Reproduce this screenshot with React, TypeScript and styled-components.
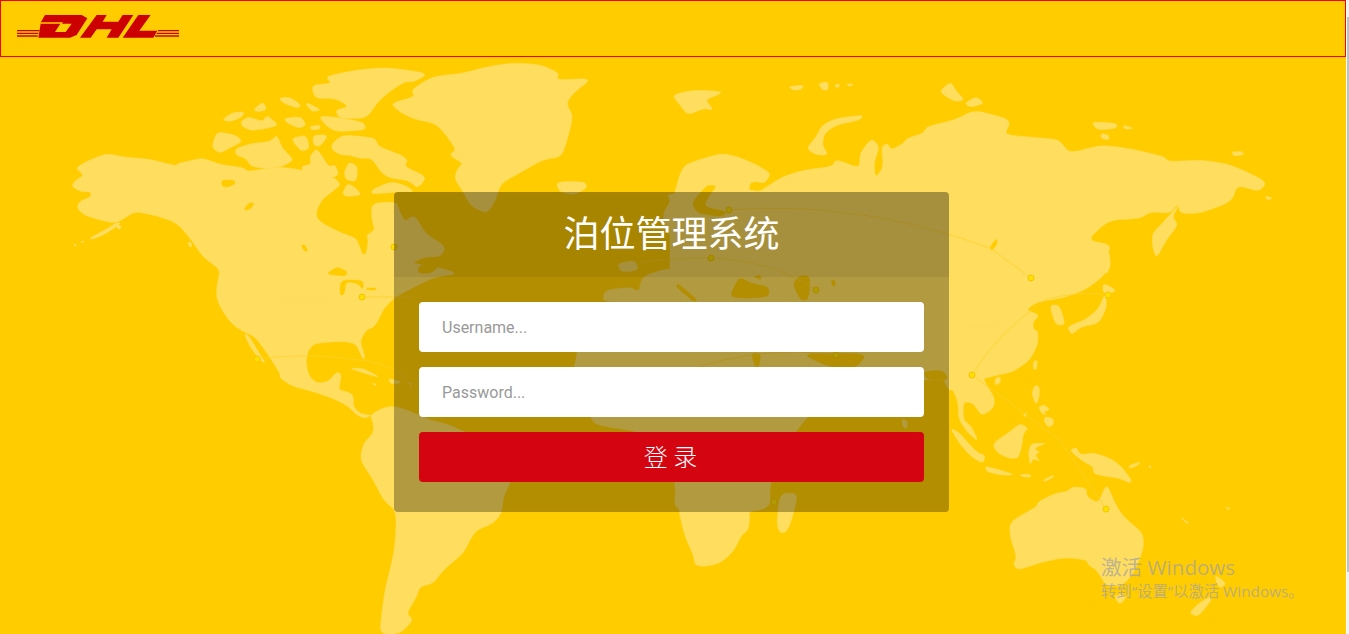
import React from "react";
import styled, { createGlobalStyle } from "styled-components";

const Global = createGlobalStyle`
  html, body { margin: 0; padding: 0; background: #fff; overflow: hidden; }
  * { box-sizing: border-box; }
`;

const Shell = styled.div`
  display: flex;
  width: 1349px;
  height: 634px;
  overflow: hidden;
`;
const Page = styled.main`
  position: relative;
  width: 1346px;
  height: 634px;
  background: #ffcc00;
  font-family: Roboto, "Noto Sans CJK SC", sans-serif;
`;
const Track = styled.div`
  width: 2px;
  height: 634px;
  margin-left: 1px;
  padding-top: 17px;
  background: #f1f1f1;
`;
const Thumb = styled.div`
  width: 2px;
  height: 555px;
  background: #c1c1c1;
`;
const MapArt = styled.svg`
  position: absolute;
  left: 0;
  top: 0;
  width: 1346px;
  height: 634px;
`;
const Land = styled.path`
  fill: #ffdd5e;
  stroke: #ffdd5e;
  stroke-width: 1.5;
  stroke-linejoin: round;
`;
const Sea = styled.path`
  fill: #ffcc00;
  stroke: #ffcc00;
  stroke-width: 1;
  stroke-linejoin: round;
`;
const Route = styled.path`
  fill: none;
  stroke: #ffd22a;
  stroke-width: 0.8;
`;
const Hub = styled.circle`
  fill: #ffdf00;
  stroke: #f7c600;
  stroke-width: 1;
`;
const Header = styled.header`
  position: relative;
  height: 57px;
  border: 1px solid #f00000;
  padding: 14px 0 0 16px;
`;
const Logo = styled.svg`
  display: block;
  width: 164px;
  height: 26px;
`;
const LogoMark = styled.path`
  fill: #cc0000;
  fill-rule: evenodd;
`;
const Panel = styled.section`
  position: relative;
  width: 555px;
  height: 320px;
  margin: 135px 0 0 394px;
  border-radius: 4px;
  overflow: hidden;
  background: rgba(0, 0, 0, 0.3);
`;
const PanelHead = styled.div`
  height: 85px;
  display: flex;
  align-items: center;
  justify-content: center;
  padding-bottom: 7px;
  background: rgba(0, 0, 0, 0.06);
`;
const Title = styled.h1`
  margin: 0;
  color: #fff;
  font-family: "Noto Sans CJK SC", sans-serif;
  font-size: 36px;
  font-weight: 400;
  line-height: 50px;
`;
const Form = styled.form`
  display: flex;
  flex-direction: column;
  gap: 15px;
  padding: 25px 25px 0;
`;
const Field = styled.input`
  display: block;
  width: 100%;
  height: 50px;
  padding: 0 23px;
  border: 0;
  border-radius: 4px;
  background: #fff;
  font-family: Roboto, sans-serif;
  font-size: 16px;
  color: #333;
  &::placeholder { color: #999; opacity: 1; }
`;
const Submit = styled.button`
  height: 50px;
  border: 0;
  border-radius: 4px;
  background: #d40511;
  color: #fff;
  font-family: "Noto Sans CJK SC", sans-serif;
  font-size: 24px;
  font-weight: 300;
  padding: 0 2px 4px 0;
`;
const Watermark = styled.aside`
  position: absolute;
  left: 1101px;
  top: 553px;
  color: rgba(160, 160, 170, 0.7);
  font-family: "Open Sans", "Noto Sans CJK SC", sans-serif;
  white-space: nowrap;
`;
const WatermarkTitle = styled.div`
  font-size: 20.6px;
  line-height: 28px;
`;
const WatermarkHint = styled.div`
  font-size: 15.35px;
  line-height: 20px;
`;

type Region = { at: string; land: string[]; sea?: string[] };

const regions: Region[] = [
  {
    at: "translate(60 60) scale(.3444 .3333)",
    land: [
      "45,325 75,305 135,280 190,292 260,297 335,318 345,310 410,295 430,300 470,315 530,322 545,335 600,325 650,322 700,330 770,345 800,355 815,375 790,395 760,420 745,450 745,475 770,495 820,520 860,535 870,560 878,585 890,580 895,540 890,525 915,510 905,480 905,430 975,425 985,450 1000,485 1030,465 1060,520 1120,560 1105,590 1060,590 1020,610 1090,620 1155,640 1100,650 1080,655 1030,680 975,710 940,745 920,790 900,810 520,810 490,780 455,720 455,680 465,630 440,610 415,590 385,545 350,500 320,480 260,462 215,455 165,490 115,480 70,465 50,445 55,425 90,410 90,395 60,395 35,380 40,365 70,345",
      "85,535 130,510 165,488 178,490 135,520 95,538",
      "40,553 48,553 44,560",
      "60,545 70,542 66,549",
      "165,495 178,498 175,508 165,505",
      "372,545 382,548 382,562 374,558",
      "790,250 820,225 880,230 915,235 925,260 990,285 1010,300 1000,320 1065,350 1040,385 1010,360 960,355 935,340 905,295 870,295 840,285 815,285 790,270",
      "820,400 835,370 860,385 875,405 830,410",
      "825,335 840,305 865,320 860,365 830,360",
      "905,390 960,365 1000,375 1030,395 990,395 960,398 905,402",
      "510,265 560,250 610,245 630,225 645,265 680,300 645,320 600,325 555,320 540,295 510,285",
      "440,262 455,215 510,225 530,245 490,265 465,280",
      "670,235 715,225 725,265 700,275",
      "735,225 780,225 755,260 735,255",
      "725,290 745,265 765,295 780,320 800,315 810,345 780,355 740,345 710,340 700,320 730,312",
      "470,180 500,158 535,155 530,170 495,185",
      "525,185 545,170 590,185 600,165 635,195 600,205 555,212 530,200",
      "650,175 700,170 715,195 695,205 660,190",
      "560,150 590,125 600,150 575,155",
      "635,115 665,110 700,135 690,145 650,130",
      "725,200 755,195 755,208 730,210",
      "710,125 760,150 730,155",
      "750,165 880,185 890,210 800,215 770,195",
      "730,75 790,70 770,50 860,30 950,22 1070,40 1030,65 1000,65 950,100 920,130 890,175 810,175 800,150 840,140 800,115 740,115",
      "960,130 1030,110 1020,90 1080,50 1170,40 1240,20 1320,8 1400,15 1450,40 1440,60 1545,55 1490,100 1470,130 1490,170 1470,250 1455,290 1400,300 1350,330 1280,370 1265,420 1240,460 1195,440 1170,395 1145,355 1155,325 1170,310 1130,285 1150,270 1125,230 1090,190 1030,178 985,155",
      "1440,365 1525,365 1530,385 1490,405 1450,395",
    ],
    sea: [
      "470,360 505,360 510,372 485,382 470,378",
      "535,445 550,428 565,430 555,445 540,452",
      "700,555 712,555 720,575 708,572",
      "775,640 805,620 835,635 830,648 790,645",
      "815,660 880,660 880,690 865,670 830,665 825,705 812,705",
      "890,685 920,683 915,690 890,690",
      "1040,620 1100,590 1105,610 1080,640 1040,640",
    ],
  },
  {
    at: "translate(200 300) scale(.3333)",
    land: [
      "50,0 75,45 100,75 130,95 165,110 205,165 240,220 240,235 280,260 330,272 370,285 420,305 445,320 470,345 495,355 515,345 505,345 480,340 460,320 460,285 440,275 415,270 425,225 410,215 385,245 350,250 325,225 318,185 325,150 345,130 400,125 445,125 470,135 490,180 495,170 480,125 495,95 530,65 550,10 555,0",
      "132,100 147,108 178,160 197,190 180,180 150,140",
      "510,345 545,325 580,318 620,330 690,360 750,375 780,390 850,420 930,480 935,540 910,590 905,640 880,670 830,690 810,720 790,760 730,810 700,850 660,860 650,890 620,940 640,960 600,1002 540,1002 545,940 555,870 570,810 585,740 590,635 550,600 520,540 480,480 490,430 520,400 520,370",
      "450,205 490,205 540,232 510,225 470,212",
      "565,235 605,245 590,252 570,250",
      "515,250 530,252 525,257",
      "625,250 637,250 635,254",
    ],
  },
  {
    at: "translate(394 192) scale(.3546 .3333)",
    land: [
      "590,335 592,295 665,285 690,300 700,255 750,235 790,230 795,180 780,130 760,100 760,60 780,30 770,0 1568,0 1568,570 1500,525 1430,660 1390,560 1330,480 1200,600 1080,630 1040,530 1000,480 980,330",
      "520,330 980,330 1000,480 1040,530 1090,620 1180,660 1130,720 1100,800 1060,870 1060,960 790,960 795,880 770,800 700,720 570,700 550,670 500,560 520,470",
      "630,215 680,205 690,235 640,240",
      "1432,680 1450,690 1445,710 1435,705",
    ],
  },
  {
    at: "translate(600 500) scale(.3333)",
    land: [
      "230,-20 240,50 255,110 280,165 285,195 310,200 360,190 400,155 425,105 445,90 450,45 445,40 490,5 500,-20",
      "540,-20 595,-20 575,60 560,95 540,100 530,70",
    ],
  },
  {
    at: "translate(670 70) scale(.3954 .3333)",
    land: [
      "5,75 60,60 135,65 110,80 90,90 110,120 85,115 45,135 25,105",
      "300,50 340,45 330,60 310,60",
      "375,40 400,35 400,60 385,60",
      "415,45 430,42 425,55",
      "445,42 465,42 455,50",
      "490,135 480,150 420,165 390,190 385,225 400,255 370,255 345,235 370,200 385,165 420,145",
      "680,65 710,35 725,65 745,90 720,95",
      "745,100 775,80 795,100 760,112",
      "1065,155 1130,160 1130,175 1080,180",
      "1145,165 1175,175 1150,178",
      "1090,190 1110,195 1110,210 1090,205",
      "1420,245 1450,245 1450,255 1425,258",
      "0,420 30,290 70,270 130,250 170,260 220,285 255,310 240,340 210,335 205,360 225,365 245,350 285,320 340,300 410,290 420,268 480,295 480,250 510,205 530,230 515,280 520,325 540,290 535,230 550,220 560,240 590,220 600,205 640,190 650,170 720,150 770,120 850,145 860,160 845,195 950,205 985,210 1010,250 1090,225 1160,235 1250,260 1260,275 1350,270 1420,285 1510,335 1490,365 1435,345 1420,395 1340,430 1290,430 1285,400 1265,430 1215,425 1190,445 1110,450 1055,510 1115,525 1105,560 1115,585 1095,620 1050,660 990,685 930,695 900,720 935,735 915,760 930,810 885,880 835,905 800,925 720,930 200,930 0,700",
      "1290,400 1270,440 1285,465 1255,510 1230,565 1220,530 1220,490 1245,460",
      "1105,520 1115,580 1105,615 1098,590 1100,560",
      "1095,640 1130,660 1105,675 1095,665",
      "1100,670 1105,710 1085,760 1040,770 1015,795 1005,770 1050,750 1085,715",
      "960,705 985,705 1000,765 975,765",
      "1505,378 1525,385 1510,390",
    ],
    sea: [
      "95,345 118,348 100,375 85,410 145,425 130,440 70,430 55,400 75,370",
      "205,335 235,340 220,360 200,360",
      "150,680 175,620 205,640 250,650 250,680 190,685",
      "210,620 230,615 230,630",
      "310,640 330,615 355,620 350,690 330,690",
      "408,630 418,632 418,648 410,648",
      "20,640 70,690 60,695 15,650",
      "205,850 230,850 225,890 215,890",
      "330,850 500,850 470,895 400,890",
      "640,905 690,900 705,930 650,930",
      "808,535 825,505 828,520 815,542",
    ],
  },
  {
    at: "translate(930 330) scale(.3333)",
    land: [
      "-10,-10 322,-10 325,40 300,90 250,125 205,135 185,140 160,145 170,165 195,205 190,235 155,258 130,220 105,215 100,225 100,270 125,290 145,335 110,305 85,265 85,220 70,180 55,180 30,125 -10,120",
      "195,145 212,140 210,160 195,165",
      "60,295 85,305 115,340 145,370 165,375 160,400 130,385 95,350",
      "165,408 210,420 255,435 210,435 170,425",
      "270,432 305,435 300,442 275,440",
      "340,450 370,435 370,442 345,455",
      "195,335 240,305 270,280 295,295 280,310 275,350 265,385 235,385 205,370 190,350",
      "295,365 305,340 350,340 320,350 315,360 330,365 315,375 330,395 310,385 300,405",
      "315,165 328,170 328,200 318,225 305,190",
      "345,260 370,265 370,285 355,292 342,275",
      "325,230 345,225 360,240 340,245 350,255 335,250",
      "280,255 292,245 285,262",
      "310,95 322,90 320,118 310,118",
      "420,360 440,352 450,375 490,368 540,385 570,405 605,450 600,460 570,445 520,438 490,430 490,410 460,395 435,375",
      "595,408 630,395 625,405 600,415",
      "655,405 665,412 660,415",
      "240,575 320,530 325,515 375,490 410,485 430,470 470,475 470,500 505,520 530,460 555,520 580,560 640,610 640,660 610,730 580,765 530,770 500,720 475,705 470,690 410,682 340,695 265,720 250,705 260,680 240,620",
      "555,795 590,795 575,822 560,815",
      "855,735 890,760 870,775 860,760",
      "840,800 845,810 805,860 778,850 800,825",
      "750,560 778,580 770,580",
      "885,530 900,535 895,540",
    ],
  },
];

/* rounds each corner of a traced outline so coasts do not read as straight facets */
function coast(points: string): string {
  const pts = points.split(" ").map((p) => p.split(",").map(Number));
  const n = pts.length;
  const lerp = (a: number[], b: number[], t: number) => [a[0] + (b[0] - a[0]) * t, a[1] + (b[1] - a[1]) * t];
  let d = "";
  pts.forEach((p, i) => {
    const prev = pts[(i - 1 + n) % n];
    const next = pts[(i + 1) % n];
    const a = lerp(p, prev, 0.35);
    const b = lerp(p, next, 0.35);
    d += `${i === 0 ? "M" : "L"}${a[0].toFixed(1)} ${a[1].toFixed(1)}Q${p[0]} ${p[1]} ${b[0].toFixed(1)} ${b[1].toFixed(1)}`;
  });
  return d + "Z";
}

const routes = [
  "M257 359 Q310 352 360 360 T412 392",
  "M362 297 L412 297",
  "M729 210 Q860 200 990 248 L1031 278",
  "M640 262 Q680 258 711 258",
  "M711 258 Q770 260 816 290",
  "M972 375 Q995 335 1045 300 Q1080 290 1108 295",
  "M972 375 L1060 440 L1106 509",
  "M690 370 Q760 345 836 355",
];

const hubs: [number, number][] = [
  [394, 247], [362, 297], [257, 359], [729, 210], [711, 258], [816, 290],
  [836, 355], [972, 375], [1031, 278], [1108, 295], [1106, 509], [774, 502],
];

function WorldMap() {
  return (
    <MapArt viewBox="0 0 1346 634" aria-hidden="true">
      {regions.map((r) => (
        <g key={r.at} transform={r.at}>
          {r.land.map((p) => <Land key={p} d={coast(p)} />)}
        </g>
      ))}
      {regions.map((r) => (
        <g key={r.at + "s"} transform={r.at}>
          {(r.sea ?? []).map((p) => <Sea key={p} d={coast(p)} />)}
        </g>
      ))}
      {routes.map((d) => <Route key={d} d={d} />)}
      {hubs.map(([x, y]) => <Hub key={`${x}-${y}`} cx={x} cy={y} r={3} />)}
    </MapArt>
  );
}

function DhlLogo() {
  return (
    <Logo viewBox="0 0 164 26" aria-label="DHL">
      <g transform="translate(-17 -15) scale(.3333)">
        <LogoMark d="M51 90H118V94H51ZM51 98H115V102H51ZM51 106H113V110H51ZM475 90H537V94H473ZM470 98H537V102H470ZM465 106H537V110H465Z" />
        <LogoMark d="M135 45H245L262 55L230 105L210 113H115L122 71H120L135 45ZM122 67L120 71H181L165 96H197L215 71H186L189 67Z" />
        <LogoMark d="M290 45H320L308 65H355L368 45H400L355 113H320L335 88H290L272 113H240Z" />
        <LogoMark d="M415 45H452L418 92H472L460 113H368Z" />
      </g>
    </Logo>
  );
}

export default function App() {
  return (
    <Shell>
      <Global />
      <Page>
        <WorldMap />
        <Header>
          <DhlLogo />
        </Header>
        <Panel>
          <PanelHead>
            <Title>泊位管理系统</Title>
          </PanelHead>
          <Form onSubmit={(e) => e.preventDefault()}>
            <Field type="text" placeholder="Username..." />
            <Field type="password" placeholder="Password..." />
            <Submit type="submit">登 录</Submit>
          </Form>
        </Panel>
        <Watermark>
          <WatermarkTitle>激活 Windows</WatermarkTitle>
          <WatermarkHint>转到“设置”以激活 Windows。</WatermarkHint>
        </Watermark>
      </Page>
      <Track>
        <Thumb />
      </Track>
    </Shell>
  );
}
